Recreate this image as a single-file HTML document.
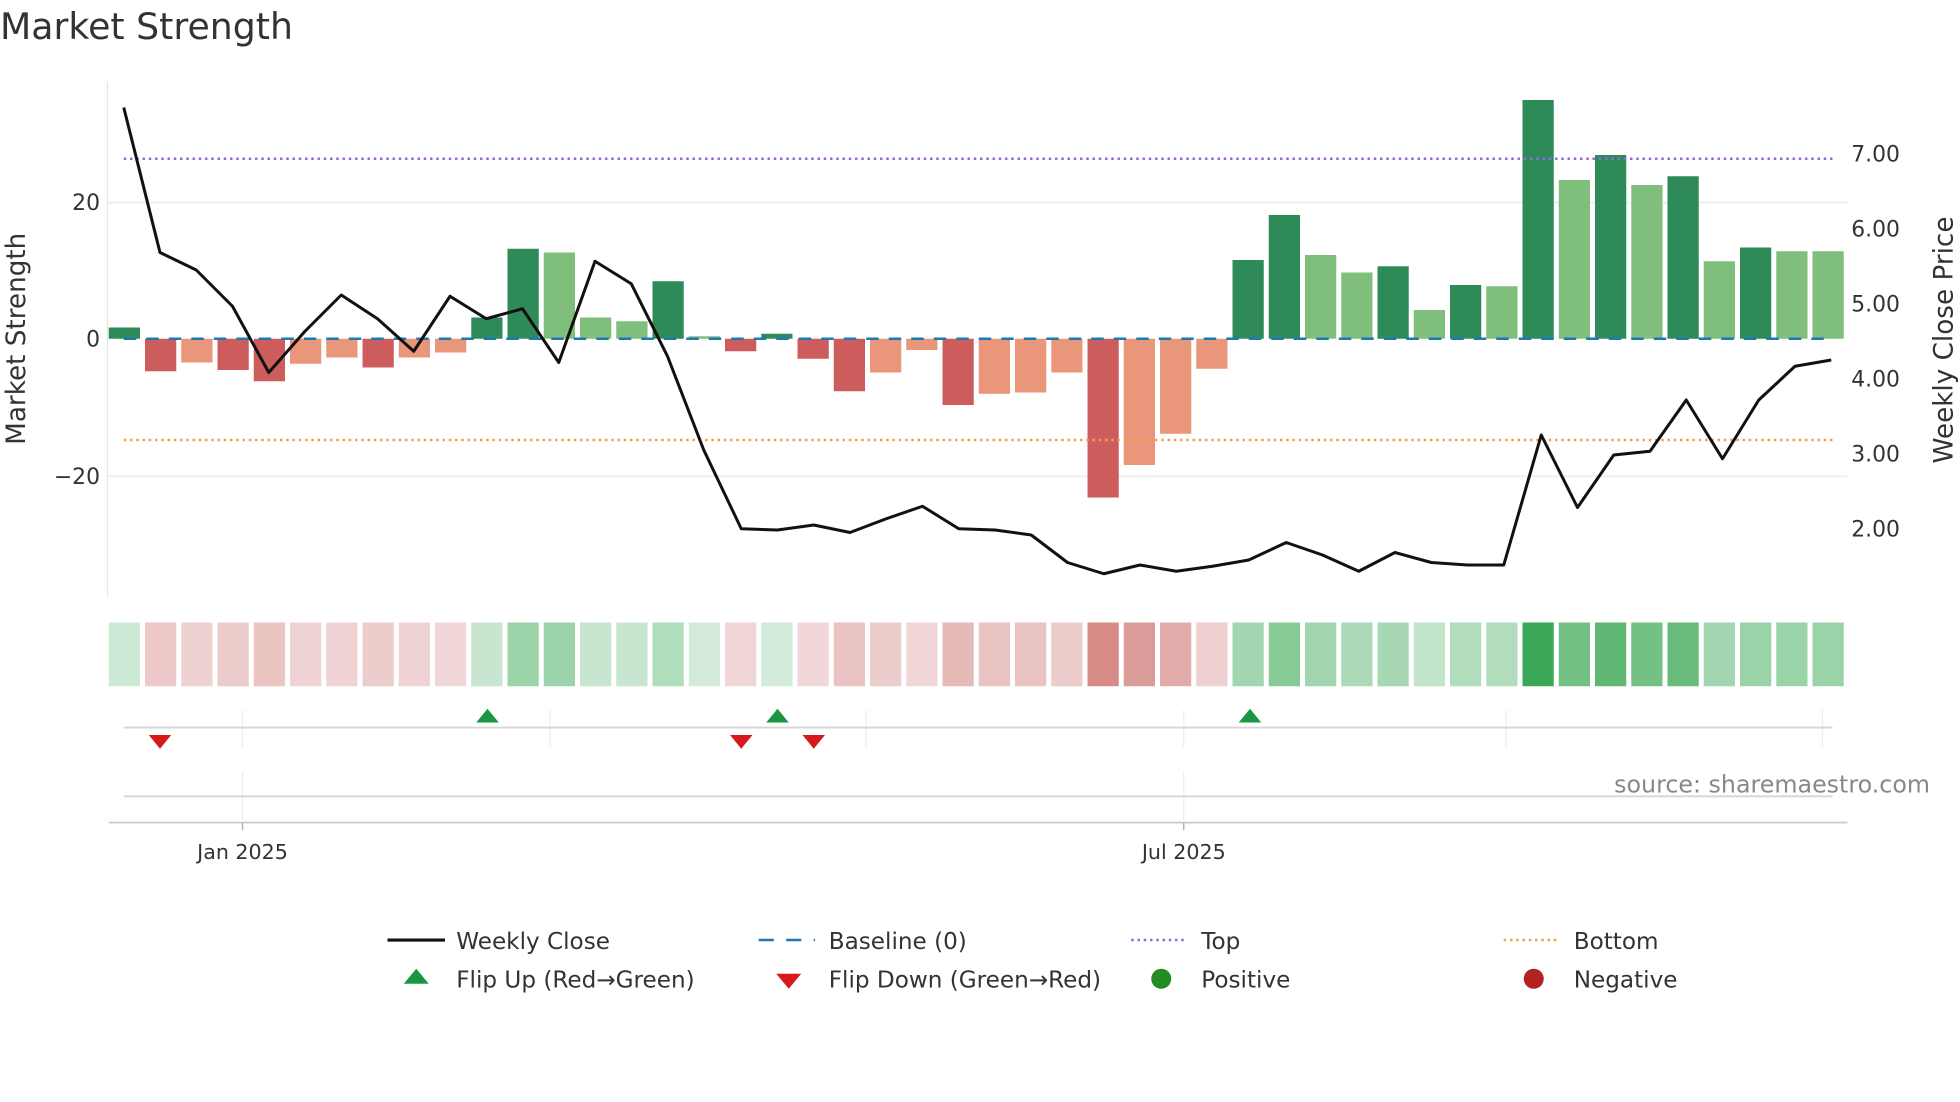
<!DOCTYPE html>
<html><head><meta charset="utf-8"><style>
html,body{margin:0;padding:0;background:#fff;}
svg{display:block;font-family:"DejaVu Sans","Liberation Sans",sans-serif;}
</style></head><body>
<svg width="1960" height="1102" viewBox="0 0 1568 881.6" xmlns="http://www.w3.org/2000/svg">
<text x="0" y="31" font-size="29" fill="#333">Market Strength</text>
<line x1="86" y1="65" x2="86" y2="478" stroke="#e6e6e6" stroke-width="1"/>
<line x1="86" y1="162" x2="1478" y2="162" stroke="#eee" stroke-width="1.5"/>
<line x1="86" y1="381" x2="1478" y2="381" stroke="#eee" stroke-width="1.5"/>
<g font-size="17.5" fill="#333">
<text x="80" y="168" text-anchor="end">20</text>
<text x="80" y="277" text-anchor="end">0</text>
<text x="80" y="387" text-anchor="end">−20</text>
<text x="1481" y="129">7.00</text>
<text x="1481" y="189">6.00</text>
<text x="1481" y="249">5.00</text>
<text x="1481" y="309">4.00</text>
<text x="1481" y="369">3.00</text>
<text x="1481" y="429">2.00</text>
</g>
<text transform="translate(20,271) rotate(-90)" font-size="21" fill="#333" text-anchor="middle">Market Strength</text>
<text transform="translate(1562,272) rotate(-90)" font-size="21" fill="#333" text-anchor="middle">Weekly Close Price</text>
<g transform="translate(87,0)">
<rect x="0" y="262" width="25" height="9" fill="#2e8b57"/>
<rect x="29" y="271" width="25" height="26" fill="#cd5c5c"/>
<rect x="58" y="271" width="25" height="19" fill="#e9967a"/>
<rect x="87" y="271" width="25" height="25" fill="#cd5c5c"/>
<rect x="116" y="271" width="25" height="34" fill="#cd5c5c"/>
<rect x="145" y="271" width="25" height="20" fill="#e9967a"/>
<rect x="174" y="271" width="25" height="15" fill="#e9967a"/>
<rect x="203" y="271" width="25" height="23" fill="#cd5c5c"/>
<rect x="232" y="271" width="25" height="15" fill="#e9967a"/>
<rect x="261" y="271" width="25" height="11" fill="#e9967a"/>
<rect x="290" y="254" width="25" height="17" fill="#2e8b57"/>
<rect x="319" y="199" width="25" height="72" fill="#2e8b57"/>
<rect x="348" y="202" width="25" height="69" fill="#7fbf7b"/>
<rect x="377" y="254" width="25" height="17" fill="#7fbf7b"/>
<rect x="406" y="257" width="25" height="14" fill="#7fbf7b"/>
<rect x="435" y="225" width="25" height="46" fill="#2e8b57"/>
<rect x="464" y="269" width="25" height="2" fill="#7fbf7b"/>
<rect x="493" y="271" width="25" height="10" fill="#cd5c5c"/>
<rect x="522" y="267" width="25" height="4" fill="#2e8b57"/>
<rect x="551" y="271" width="25" height="16" fill="#cd5c5c"/>
<rect x="580" y="271" width="25" height="42" fill="#cd5c5c"/>
<rect x="609" y="271" width="25" height="27" fill="#e9967a"/>
<rect x="638" y="271" width="25" height="9" fill="#e9967a"/>
<rect x="667" y="271" width="25" height="53" fill="#cd5c5c"/>
<rect x="696" y="271" width="25" height="44" fill="#e9967a"/>
<rect x="725" y="271" width="25" height="43" fill="#e9967a"/>
<rect x="754" y="271" width="25" height="27" fill="#e9967a"/>
<rect x="783" y="271" width="25" height="127" fill="#cd5c5c"/>
<rect x="812" y="271" width="25" height="101" fill="#e9967a"/>
<rect x="841" y="271" width="25" height="76" fill="#e9967a"/>
<rect x="870" y="271" width="25" height="24" fill="#e9967a"/>
<rect x="899" y="208" width="25" height="63" fill="#2e8b57"/>
<rect x="928" y="172" width="25" height="99" fill="#2e8b57"/>
<rect x="957" y="204" width="25" height="67" fill="#7fbf7b"/>
<rect x="986" y="218" width="25" height="53" fill="#7fbf7b"/>
<rect x="1015" y="213" width="25" height="58" fill="#2e8b57"/>
<rect x="1044" y="248" width="25" height="23" fill="#7fbf7b"/>
<rect x="1073" y="228" width="25" height="43" fill="#2e8b57"/>
<rect x="1102" y="229" width="25" height="42" fill="#7fbf7b"/>
<rect x="1131" y="80" width="25" height="191" fill="#2e8b57"/>
<rect x="1160" y="144" width="25" height="127" fill="#7fbf7b"/>
<rect x="1189" y="124" width="25" height="147" fill="#2e8b57"/>
<rect x="1218" y="148" width="25" height="123" fill="#7fbf7b"/>
<rect x="1247" y="141" width="25" height="130" fill="#2e8b57"/>
<rect x="1276" y="209" width="25" height="62" fill="#7fbf7b"/>
<rect x="1305" y="198" width="25" height="73" fill="#2e8b57"/>
<rect x="1334" y="201" width="25" height="70" fill="#7fbf7b"/>
<rect x="1363" y="201" width="25" height="70" fill="#7fbf7b"/>
</g>
<line x1="99" y1="271" x2="1466" y2="271" stroke="#1f77b4" stroke-width="2" stroke-dasharray="10,8"/>
<line x1="99" y1="127" x2="1466" y2="127" stroke="#9467dd" stroke-width="2" stroke-dasharray="2,3"/>
<line x1="99" y1="352" x2="1466" y2="352" stroke="#f0a050" stroke-width="2" stroke-dasharray="2,3"/>
<polyline fill="none" stroke="#111" stroke-width="2.4" stroke-linejoin="round" points="99,86 128,202 157,216 186,245 215,298 244,265 273,236 302,255 331,281 360,237 389,255 418,247 447,290 476,209 505,227 534,285 563,360 593,423 622,424 651,420 680,426 709,415 738,405 767,423 796,424 825,428 854,450 883,459 912,452 941,457 970,453 999,448 1029,434 1058,444 1087,457 1116,442 1145,450 1174,452 1203,452 1233,348 1262,406 1291,364 1320,361 1349,320 1378,367 1407,320 1436,293 1465,288"/>
<g transform="translate(87,0)">
<rect x="0" y="498" width="25" height="51" fill="#cce9d5"/>
<rect x="29" y="498" width="25" height="51" fill="#ecc9c8"/>
<rect x="58" y="498" width="25" height="51" fill="#eed1d1"/>
<rect x="87" y="498" width="25" height="51" fill="#eccccb"/>
<rect x="116" y="498" width="25" height="51" fill="#eac4c1"/>
<rect x="145" y="498" width="25" height="51" fill="#efd3d4"/>
<rect x="174" y="498" width="25" height="51" fill="#efd3d4"/>
<rect x="203" y="498" width="25" height="51" fill="#edcccc"/>
<rect x="232" y="498" width="25" height="51" fill="#efd3d4"/>
<rect x="261" y="498" width="25" height="51" fill="#f0d6d6"/>
<rect x="290" y="498" width="25" height="51" fill="#c8e6cf"/>
<rect x="319" y="498" width="25" height="51" fill="#9cd3a9"/>
<rect x="348" y="498" width="25" height="51" fill="#9dd3aa"/>
<rect x="377" y="498" width="25" height="51" fill="#c8e6cf"/>
<rect x="406" y="498" width="25" height="51" fill="#c8e6cf"/>
<rect x="435" y="498" width="25" height="51" fill="#b0ddbb"/>
<rect x="464" y="498" width="25" height="51" fill="#d4ebdb"/>
<rect x="493" y="498" width="25" height="51" fill="#f0d6d6"/>
<rect x="522" y="498" width="25" height="51" fill="#d2ebd9"/>
<rect x="551" y="498" width="25" height="51" fill="#f0d6d6"/>
<rect x="580" y="498" width="25" height="51" fill="#e9c3c1"/>
<rect x="609" y="498" width="25" height="51" fill="#edcccc"/>
<rect x="638" y="498" width="25" height="51" fill="#f0d6d6"/>
<rect x="667" y="498" width="25" height="51" fill="#e6bab7"/>
<rect x="696" y="498" width="25" height="51" fill="#e9c3c1"/>
<rect x="725" y="498" width="25" height="51" fill="#e9c3c1"/>
<rect x="754" y="498" width="25" height="51" fill="#eccccb"/>
<rect x="783" y="498" width="25" height="51" fill="#d68b87"/>
<rect x="812" y="498" width="25" height="51" fill="#da9c98"/>
<rect x="841" y="498" width="25" height="51" fill="#e1aca9"/>
<rect x="870" y="498" width="25" height="51" fill="#efd0d0"/>
<rect x="899" y="498" width="25" height="51" fill="#a2d6b0"/>
<rect x="928" y="498" width="25" height="51" fill="#86ca96"/>
<rect x="957" y="498" width="25" height="51" fill="#a0d5ad"/>
<rect x="986" y="498" width="25" height="51" fill="#acdab8"/>
<rect x="1015" y="498" width="25" height="51" fill="#a7d8b3"/>
<rect x="1044" y="498" width="25" height="51" fill="#c1e4ca"/>
<rect x="1073" y="498" width="25" height="51" fill="#b2ddbd"/>
<rect x="1102" y="498" width="25" height="51" fill="#b2ddbd"/>
<rect x="1131" y="498" width="25" height="51" fill="#3aa856"/>
<rect x="1160" y="498" width="25" height="51" fill="#72c083"/>
<rect x="1189" y="498" width="25" height="51" fill="#5fb773"/>
<rect x="1218" y="498" width="25" height="51" fill="#74c185"/>
<rect x="1247" y="498" width="25" height="51" fill="#69bb7b"/>
<rect x="1276" y="498" width="25" height="51" fill="#a2d6b0"/>
<rect x="1305" y="498" width="25" height="51" fill="#9bd3a9"/>
<rect x="1334" y="498" width="25" height="51" fill="#9bd3a9"/>
<rect x="1363" y="498" width="25" height="51" fill="#9bd3a9"/>
</g>
<g stroke="#eee" stroke-width="1">
<line x1="194" y1="568" x2="194" y2="598"/><line x1="440" y1="568" x2="440" y2="598"/>
<line x1="693" y1="568" x2="693" y2="598"/><line x1="947" y1="568" x2="947" y2="598"/>
<line x1="1205" y1="568" x2="1205" y2="598"/><line x1="1458" y1="568" x2="1458" y2="598"/>
<line x1="194" y1="617" x2="194" y2="656"/><line x1="947" y1="617" x2="947" y2="656"/>
</g>
<line x1="99" y1="582" x2="1466" y2="582" stroke="#d6d6d6" stroke-width="1.5"/>
<line x1="99" y1="637" x2="1466" y2="637" stroke="#d6d6d6" stroke-width="1.5"/>
<line x1="87" y1="658" x2="1478" y2="658" stroke="#ccc" stroke-width="1.5"/>
<line x1="194" y1="658" x2="194" y2="664" stroke="#aaa"/><line x1="947" y1="658" x2="947" y2="664" stroke="#aaa"/>
<g fill="#1a9641">
<polygon points="381,578 399,578 390,567"/><polygon points="613,578 631,578 622,567"/><polygon points="991,578 1009,578 1000,567"/>
</g>
<g fill="#d7191c">
<polygon points="119,588 137,588 128,599"/><polygon points="584,588 602,588 593,599"/><polygon points="642,588 660,588 651,599"/>
</g>
<text x="1544" y="634" font-size="19" fill="#888" text-anchor="end">source: sharemaestro.com</text>
<g font-size="16.5" fill="#333" text-anchor="middle">
<text x="194" y="687">Jan 2025</text><text x="947" y="687">Jul 2025</text>
</g>
<g font-size="18.5" fill="#333">
<line x1="310" y1="752" x2="356" y2="752" stroke="#111" stroke-width="2.5"/>
<text x="365" y="759">Weekly Close</text>
<line x1="607" y1="752" x2="652" y2="752" stroke="#1f77b4" stroke-width="2" stroke-dasharray="12,10"/>
<text x="663" y="759">Baseline (0)</text>
<line x1="905" y1="752" x2="949" y2="752" stroke="#9467dd" stroke-width="2" stroke-dasharray="2,3"/>
<text x="961" y="759">Top</text>
<line x1="1203" y1="752" x2="1247" y2="752" stroke="#f0a050" stroke-width="2" stroke-dasharray="2,3"/>
<text x="1259" y="759">Bottom</text>
<polygon points="323,787 343,787 333,775" fill="#1a9641"/>
<text x="365" y="790">Flip Up (Red→Green)</text>
<polygon points="621,779 641,779 631,791" fill="#d7191c"/>
<text x="663" y="790">Flip Down (Green→Red)</text>
<circle cx="929" cy="783" r="8" fill="#228b22"/>
<text x="961" y="790">Positive</text>
<circle cx="1227" cy="783" r="8" fill="#b22222"/>
<text x="1259" y="790">Negative</text>
</g>
</svg>
</body></html>
